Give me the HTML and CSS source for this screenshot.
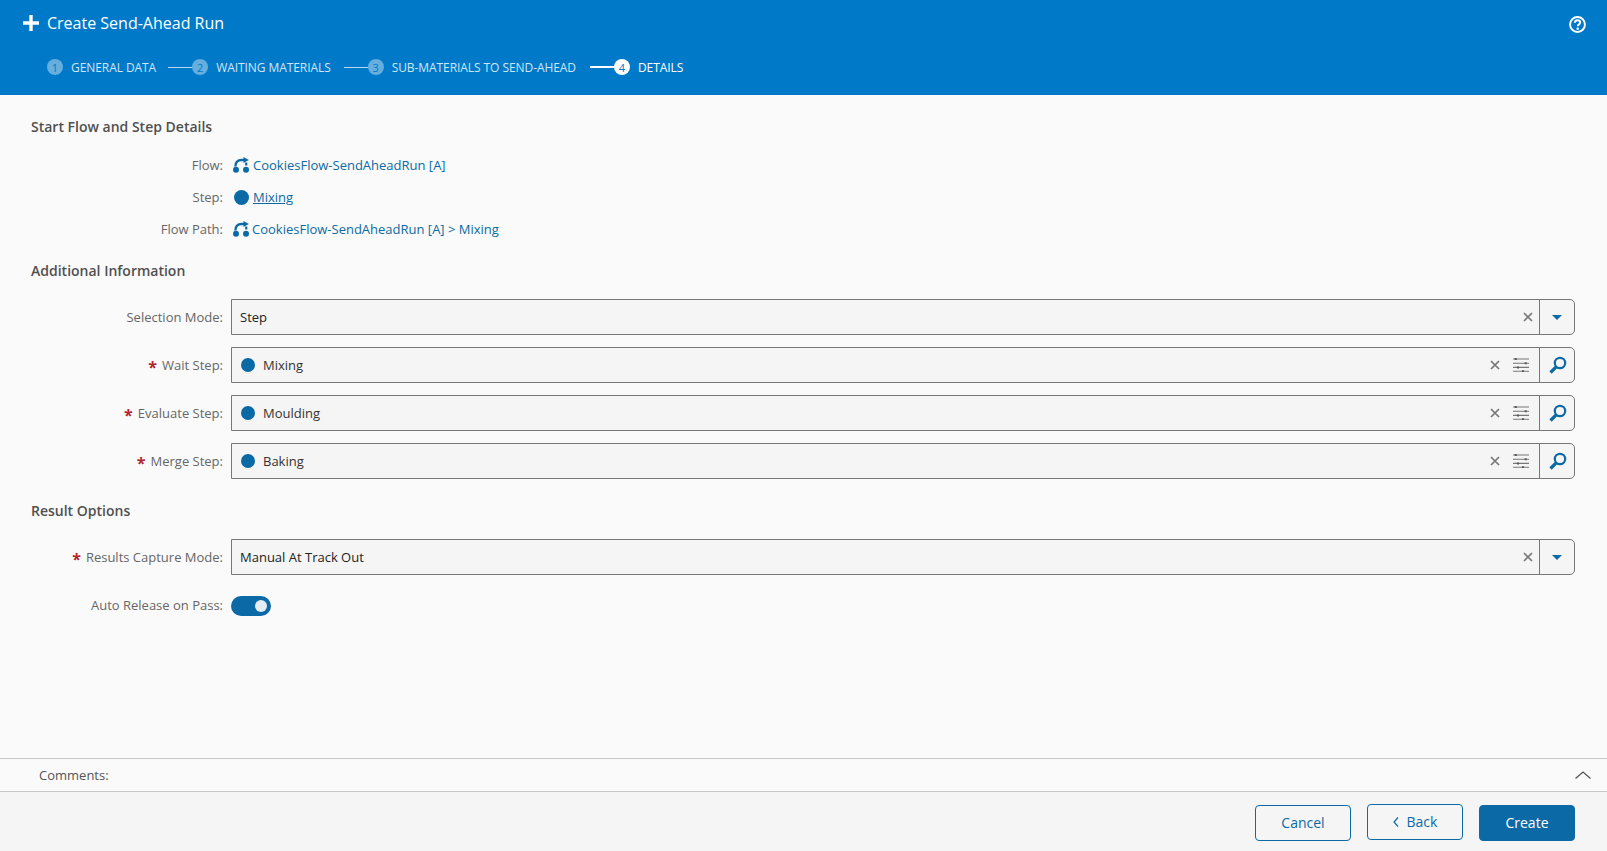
FILE: index.html
```html
<!DOCTYPE html>
<html lang="en">
<head>
<meta charset="utf-8">
<title>Create Send-Ahead Run</title>
<link rel="stylesheet" href="styles.css">
</head>
<body>
<div class="page">
  <header class="header">
    <div class="title-row">
      <svg class="plus" viewBox="0 0 16 16"><path d="M6.300 0h3.400v6.300H16v3.400H9.700V16H6.300V9.700H0V6.300h6.300z" fill="#fff"/></svg>
      <span class="title">Create Send-Ahead Run</span>
      <svg class="help" viewBox="0 0 16 16"><circle cx="8" cy="8" r="7" fill="none" stroke="#fff" stroke-width="1.800"/><path d="M5.500 6.300C5.600 4.800 6.700 4 8 4c1.500 0 2.500.8 2.500 2.100 0 1-.6 1.500-1.300 2-.7.500-.9.700-.9 1.500" fill="none" stroke="#fff" stroke-width="1.900"/><circle cx="8.200" cy="12" r="1.200" fill="#fff"/></svg>
    </div>
    <nav class="steps">
      <span class="num">1</span><span class="step-label">GENERAL DATA</span>
      <span class="line first"></span><span class="num">2</span><span class="step-label">WAITING MATERIALS</span>
      <span class="line"></span><span class="num">3</span><span class="step-label">SUB-MATERIALS TO SEND-AHEAD</span>
      <span class="line on"></span><span class="num on">4</span><span class="step-label on">DETAILS</span>
    </nav>
  </header>

  <main class="content">
    <h2 class="section first">Start Flow and Step Details</h2>
    <div class="info-row">
      <span class="label">Flow:</span>
      <span class="value"><svg class="flow" viewBox="0 0 16 16"><use href="#flow-icon"/></svg><a class="link">CookiesFlow-SendAheadRun [A]</a></span>
    </div>
    <div class="info-row">
      <span class="label">Step:</span>
      <span class="value"><span class="dot"></span><a class="link under">Mixing</a></span>
    </div>
    <div class="info-row">
      <span class="label">Flow Path:</span>
      <span class="value tight"><svg class="flow" viewBox="0 0 16 16"><use href="#flow-icon"/></svg><a class="link">CookiesFlow-SendAheadRun [A] &gt; Mixing</a></span>
    </div>

    <h2 class="section second">Additional Information</h2>
    <div class="form-row">
      <span class="label">Selection Mode:</span>
      <div class="field">
        <span class="text">Step</span>
        <svg class="clear" viewBox="0 0 10 10"><use href="#x-icon"/></svg>
        <span class="addon"><span class="caret"></span></span>
      </div>
    </div>
    <div class="form-row">
      <span class="label"><span class="req">*</span>Wait Step:</span>
      <div class="field">
        <span class="dot big"></span><span class="text">Mixing</span>
        <svg class="clear" viewBox="0 0 10 10"><use href="#x-icon"/></svg>
        <svg class="sliders" viewBox="0 0 16 14"><use href="#sliders-icon"/></svg>
        <span class="addon"><svg class="search" viewBox="0 0 18 18"><use href="#search-icon"/></svg></span>
      </div>
    </div>
    <div class="form-row">
      <span class="label"><span class="req">*</span>Evaluate Step:</span>
      <div class="field">
        <span class="dot big"></span><span class="text">Moulding</span>
        <svg class="clear" viewBox="0 0 10 10"><use href="#x-icon"/></svg>
        <svg class="sliders" viewBox="0 0 16 14"><use href="#sliders-icon"/></svg>
        <span class="addon"><svg class="search" viewBox="0 0 18 18"><use href="#search-icon"/></svg></span>
      </div>
    </div>
    <div class="form-row">
      <span class="label"><span class="req">*</span>Merge Step:</span>
      <div class="field">
        <span class="dot big"></span><span class="text">Baking</span>
        <svg class="clear" viewBox="0 0 10 10"><use href="#x-icon"/></svg>
        <svg class="sliders" viewBox="0 0 16 14"><use href="#sliders-icon"/></svg>
        <span class="addon"><svg class="search" viewBox="0 0 18 18"><use href="#search-icon"/></svg></span>
      </div>
    </div>

    <h2 class="section third">Result Options</h2>
    <div class="form-row">
      <span class="label"><span class="req">*</span>Results Capture Mode:</span>
      <div class="field">
        <span class="text">Manual At Track Out</span>
        <svg class="clear" viewBox="0 0 10 10"><use href="#x-icon"/></svg>
        <span class="addon"><span class="caret"></span></span>
      </div>
    </div>
    <div class="form-row toggle-row">
      <span class="label">Auto Release on Pass:</span>
      <span class="toggle"><span class="knob"></span></span>
    </div>
  </main>

  <div class="comments">
    <span class="comments-label">Comments:</span>
    <svg class="chev" viewBox="0 0 16 8"><path d="M.5 7.500 8 1l7.500 6.500" fill="none" stroke="#555" stroke-width="1.300"/></svg>
  </div>

  <footer class="footer">
    <button class="btn">Cancel</button>
    <button class="btn back"><svg class="back-icon" viewBox="0 0 6 10"><path d="M5 .5 1 5l4 4.500" fill="none" stroke="#0b6aa5" stroke-width="1.200"/></svg>Back</button>
    <button class="btn primary">Create</button>
  </footer>
</div>

<svg class="defs" aria-hidden="true">
  <defs>
    <g id="flow-icon">
      <path d="M2.500 9.500C2 5 5 3 8.500 3H12" fill="none" stroke="#0b6aa5" stroke-width="2.400"/>
      <path d="M10.500 0 15.800 3 10.500 6z" fill="#0b6aa5"/>
      <path d="M13.200 5.500v3" fill="none" stroke="#0b6aa5" stroke-width="2.200"/>
      <circle cx="3" cy="12.800" r="3" fill="#0b6aa5"/>
      <circle cx="13" cy="12.800" r="3" fill="#0b6aa5"/>
    </g>
    <g id="x-icon"><path d="M1 1l8 8M9 1 1 9" fill="none" stroke="#777" stroke-width="1.700"/></g>
    <g id="sliders-icon" fill="none">
      <path d="M0 1h16M0 5.200h16M0 9.400h16M0 13.300h16" stroke="#777" stroke-width="1.100"/>
      <path d="M2.700 0v2M12.700 4.200v2M5 8.400v2M10 12.300v2" stroke="#555" stroke-width="2"/>
    </g>
    <g id="search-icon" fill="none" stroke="#0b6aa5">
      <circle cx="11" cy="7" r="5.200" stroke-width="2.200"/>
      <path d="M7.200 10.800 1.500 16.500" stroke-width="3.200"/>
    </g>
  </defs>
</svg>
</body>
</html>
```
FILE: styles.css
```css
* { box-sizing: border-box; }
html, body { margin: 0; height: 851px; overflow: hidden; }
body { font-family: "Open Sans", "Noto Sans", sans-serif; font-size: 13px; color: #555; background: #fafafa; }
.defs { width: 0; height: 0; display: block; overflow: hidden; }
.page { height: 851px; display: flex; flex-direction: column; }

.header { height: 95px; background: #0079c9; color: #fff; padding: 13px 21px 0 23px; flex: none; }
.title-row { display: flex; align-items: center; height: 20px; }
.plus { width: 16px; height: 16px; margin-right: 8px; }
.title { font-size: 16px; }
.help { width: 17px; height: 17px; margin-left: auto; margin-top: 3px; }
.steps { display: flex; align-items: center; margin: 25px 0 0 24px; height: 18px; font-size: 12px; letter-spacing: -0.07px; }
.num { width: 16px; height: 16px; border-radius: 50%; background: #66aedd; color: #0079c9; font-size: 11px; letter-spacing: 0; display: flex; align-items: center; justify-content: center; margin-right: 8px; }
.num.on { background: #fff; color: #0079c9; }
.step-label { color: #cfe6f5; }
.step-label.on { color: #fff; }
.line { width: 24px; height: 1px; background: #b9dbf1; margin-left: 13px; }
.line.first { margin-left: 12px; }
.line.on { background: #fff; height: 2px; margin-left: 14px; }

.content { flex: 1; min-height: 0; padding: 0 32px 0 31px; }
.section { font-size: 14px; font-weight: 600; color: #505050; margin: 0; line-height: 20px; }
.section.first { margin-top: 22px; margin-bottom: 12px; }
.section.second { margin-top: 16px; margin-bottom: 18px; }
.section.third { margin-top: 22px; margin-bottom: 18px; }

.info-row { display: flex; align-items: center; height: 32px; margin-left: -31px; }
.form-row { display: flex; align-items: center; height: 36px; margin-left: -31px; margin-bottom: 12px; }
.label { width: 223px; text-align: right; margin-right: 8px; flex: none; color: #666; }
.req { color: #b3262e; font-size: 16px; font-weight: 700; margin-right: 5px; line-height: 1; vertical-align: -3px; }
.value { display: flex; align-items: center; margin-left: 2px; }
.link { color: #0b6aa5; margin-left: 4px; }
.value.tight .link { margin-left: 3px; }
.link.under { text-decoration: underline; margin-left: 3px; }
.flow { width: 16px; height: 16px; flex: none; }
.dot { width: 15px; height: 15px; border-radius: 50%; background: #0b6aa5; flex: none; margin-left: 1px; margin-right: 1px; }
.dot.big { width: 14px; height: 14px; margin: 0 8px 0 9px; }

.field { flex: 1; height: 36px; display: flex; align-items: center; border: 1px solid #777; border-radius: 0 5px 5px 0; background: #f5f5f5; }
.text { color: #222; }
.dot.big + .text { color: #333; }
.field > .text:first-child { margin-left: 8px; }
.clear { width: 10px; height: 10px; margin-left: auto; margin-right: 6px; flex: none; }
.sliders { width: 16px; height: 14px; margin-left: 7px; margin-right: 10px; flex: none; }
.addon { width: 35px; height: 34px; border-left: 1px solid #777; display: flex; align-items: center; justify-content: center; flex: none; }
.caret { width: 0; height: 0; border-left: 5px solid transparent; border-right: 5px solid transparent; border-top: 5px solid #0b6aa5; }
.search { width: 18px; height: 18px; margin-left: 2px; }
.toggle-row { height: 20px; margin-top: 21px; margin-bottom: 0; }
.toggle-row .label { margin-top: -2px; }
.toggle { width: 40px; height: 20px; border-radius: 10px; background: #0b6aa5; display: flex; align-items: center; justify-content: flex-end; padding-right: 4px; }
.knob { width: 12px; height: 12px; border-radius: 50%; background: #e4edf5; }

.comments { height: 34px; flex: none; display: flex; align-items: center; justify-content: space-between; border-top: 1px solid #c8c8c8; border-bottom: 1px solid #c8c8c8; padding: 0 16px 0 39px; color: #555; }
.chev { width: 16px; height: 8px; }
.footer { height: 59px; flex: none; background: #f5f5f5; display: flex; justify-content: flex-end; align-items: flex-start; gap: 16px; padding: 13px 32px 0 0; }
.btn { width: 96px; height: 36px; font: inherit; font-size: 14px; color: #0b6aa5; background: transparent; border: 1px solid #0b6aa5; border-radius: 4px; display: flex; align-items: center; justify-content: center; padding: 0 0 2px; }
.btn.back { margin-top: -1px; }
.back-icon { width: 6px; height: 10px; margin: 2px 8px 0 0; }
.btn.primary { background: #0b6aa5; color: #fff; }
```
